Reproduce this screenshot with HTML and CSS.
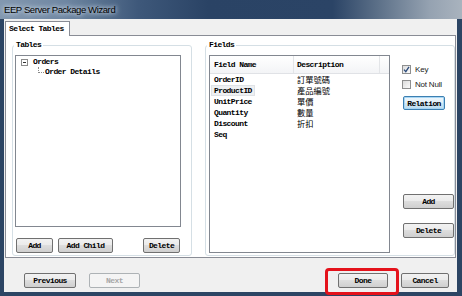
FILE: index.html
```html
<!DOCTYPE html>
<html lang="en">
<head>
  <meta charset="UTF-8">
  <title>EEP Server Package Wizard</title>
  <link rel="stylesheet" href="styles.css">
</head>
<body>
  <div class="window">
    <div class="titlebar">
      <span class="title">EEP Server Package Wizard</span>
    </div>
    <div class="client">
      <div class="tabstrip">
        <div class="tab">Select Tables</div>
      </div>
      <div class="tabpanel">
        <div class="group tables">
          <div class="legend">Tables</div>
          <div class="listbox">
            <div class="node"><span class="expander"></span><span>Orders</span></div>
            <div class="node child"><span class="elbow"></span><span>Order Details</span></div>
          </div>
          <div class="btnrow">
            <button class="btn w37">Add</button>
            <button class="btn w55">Add Child</button>
            <button class="btn w37 push">Delete</button>
          </div>
        </div>
        <div class="group fields">
          <div class="legend">Fields</div>
          <div class="fields-body">
            <div class="listview">
              <div class="lv-head">
                <div class="col1">Field Name</div>
                <div class="col2">Description</div>
                <div class="col3"></div>
              </div>
              <div class="lv-row"><div class="col1">OrderID</div><div class="col2 cjk">訂單號碼</div></div>
              <div class="lv-row"><div class="col1"><span class="hot">ProductID</span></div><div class="col2 cjk">產品編號</div></div>
              <div class="lv-row"><div class="col1">UnitPrice</div><div class="col2 cjk">單價</div></div>
              <div class="lv-row"><div class="col1">Quantity</div><div class="col2 cjk">數量</div></div>
              <div class="lv-row"><div class="col1">Discount</div><div class="col2 cjk">折扣</div></div>
              <div class="lv-row"><div class="col1">Seq</div><div class="col2 cjk"></div></div>
            </div>
            <div class="side">
              <div class="check first">
                <span class="box">
                  <svg width="7" height="7" viewBox="0 0 7 7"><path d="M1 3.6 L2.8 5.6 L6 0.8" fill="none" stroke="#2a4a7a" stroke-width="1.3"/></svg>
                </span>
                <span>Key</span>
              </div>
              <div class="check">
                <span class="box"></span>
                <span>Not Null</span>
              </div>
              <button class="btn relation">Relation</button>
              <button class="btn side-add">Add</button>
              <button class="btn side-delete">Delete</button>
            </div>
          </div>
        </div>
      </div>
      <div class="footer">
        <button class="btn prev">Previous</button>
        <button class="btn next" disabled>Next</button>
        <button class="btn done">Done</button>
        <button class="btn cancel">Cancel</button>
      </div>
    </div>
    <div class="callout"></div>
  </div>
</body>
</html>
```

FILE: styles.css
```css
body {
  margin: 0;
  padding: 0;
  font-family: "Liberation Mono", monospace;
  font-size: 8px;
  font-weight: bold;
  letter-spacing: -0.6px;
  color: #000;
}

.window {
  position: relative;
  width: 462px;
  height: 296px;
  display: flex;
  flex-direction: column;
  background: #2c4564;
  overflow: hidden;
}

.titlebar {
  height: 19px;
  flex: none;
  display: flex;
  align-items: center;
  padding-left: 4px;
  background: linear-gradient(to right, #8398b0 0%, #6f87a2 14%, #3e587a 30%, #2a4365 45%, #2b4466 72%, #5d7189 82%, #95a2b1 93%, #a9b3be 100%);
}

.title {
  font-family: "Liberation Sans", sans-serif;
  font-size: 9.5px;
  font-weight: normal;
  letter-spacing: -0.4px;
  color: #000;
  text-shadow: 0 0 4px #dfe8f2, 0 0 6px #c9d6e4;
}

.client {
  flex: 1;
  display: flex;
  flex-direction: column;
  margin: 0 5px 4px 4px;
  background: #f0f0f0;
}

.tabstrip {
  height: 16px;
  flex: none;
  display: flex;
  align-items: flex-end;
  padding-left: 1px;
}

.tab {
  position: relative;
  z-index: 1;
  width: 65px;
  height: 15px;
  box-sizing: border-box;
  margin-bottom: -1px;
  padding-left: 3px;
  line-height: 13px;
  border: 1px solid #898c95;
  border-bottom: none;
  background: #fff;
}

.tabpanel {
  height: 223px;
  flex: none;
  box-sizing: border-box;
  margin: 0 1px;
  padding: 9px 0 0 6px;
  display: flex;
  gap: 13px;
  border: 1px solid #898c95;
  background: #fff;
}

.group {
  height: 211px;
  box-sizing: border-box;
  border: 1px solid #d5dfe5;
  border-radius: 3px;
}

.tables {
  width: 180px;
}

.fields {
  width: 250px;
}

.legend {
  width: fit-content;
  margin: -6px 0 0 1px;
  padding: 0 2px;
  line-height: 10px;
  background: #fff;
}

.listbox {
  width: 166px;
  height: 172px;
  box-sizing: border-box;
  margin: 5px 0 0 2px;
  padding-top: 1px;
  border: 1px solid #828790;
}

.node {
  height: 10px;
  line-height: 10px;
  display: flex;
  align-items: center;
}

.expander {
  position: relative;
  width: 7px;
  height: 7px;
  box-sizing: border-box;
  margin: 0 5px 0 5px;
  border: 1px solid #8c8c8c;
  background: #fff;
}

.expander::after {
  content: "";
  position: absolute;
  left: 1px;
  top: 2px;
  width: 3px;
  height: 1px;
  background: #333;
}

.elbow {
  align-self: flex-start;
  width: 6px;
  height: 6px;
  box-sizing: border-box;
  margin: 0 1px 0 22px;
  border-left: 1px dotted #8a8a8a;
  border-bottom: 1px dotted #8a8a8a;
}

.btnrow {
  display: flex;
  gap: 5px;
  width: 164px;
  margin: 11px 0 0 3px;
}

.btn {
  height: 15px;
  box-sizing: border-box;
  padding: 0;
  border: 1px solid #707070;
  border-radius: 2px;
  background: linear-gradient(#f2f2f2, #ebebeb 45%, #dddddd 50%, #cfcfcf);
  font-family: "Liberation Mono", monospace;
  font-size: 8px;
  font-weight: bold;
  letter-spacing: -0.6px;
  color: #000;
}

.w37 {
  width: 37px;
}

.w55 {
  width: 55px;
}

.push {
  margin-left: auto;
}

.fields-body {
  display: flex;
  margin: 5px 0 0 3px;
}

.listview {
  width: 181px;
  height: 198px;
  box-sizing: border-box;
  border: 1px solid #828790;
}

.lv-head {
  height: 18px;
  box-sizing: border-box;
  display: flex;
  align-items: stretch;
  line-height: 17px;
  border-bottom: 1px solid #e0e2e6;
  background: linear-gradient(#fff, #f3f4f6);
}

.col1 {
  width: 84px;
  box-sizing: border-box;
  padding-left: 4px;
}

.col2 {
  width: 86px;
  box-sizing: border-box;
  padding-left: 3px;
}

.lv-head .col1,
.lv-head .col2 {
  border-right: 1px solid #e3e5e8;
}

.col3 {
  flex: 1;
}

.lv-row {
  height: 11px;
  line-height: 11px;
  display: flex;
}

.cjk {
  font-family: "Noto Sans CJK TC", sans-serif;
  font-size: 8.25px;
  font-weight: normal;
  letter-spacing: 0;
}

.hot {
  margin-left: -2px;
  padding: 0 2px;
  background: #eef0f2;
  outline: 1px solid #dfe2e6;
}

.side {
  width: 52px;
  margin-left: 12px;
  display: flex;
  flex-direction: column;
  align-items: flex-start;
}

.check {
  height: 9px;
  display: flex;
  align-items: center;
  margin-top: 6px;
  font-family: "Liberation Sans", sans-serif;
  font-size: 8px;
  font-weight: normal;
  letter-spacing: -0.2px;
  color: #222;
}

.check.first {
  margin-top: 10px;
}

.box {
  width: 9px;
  height: 9px;
  box-sizing: border-box;
  margin-right: 4px;
  display: flex;
  align-items: center;
  justify-content: center;
  border: 1px solid #8e8f8f;
  background: linear-gradient(135deg, #dcdcdc, #fbfbfb);
}

.relation {
  width: 42px;
  height: 14px;
  margin: 7px 0 0 1px;
  border-color: #3c7fb1;
  box-shadow: inset 0 0 0 1px #a7d6f4;
  background: linear-gradient(#eef6fb, #e3f0f8 50%, #cfe6f4 51%, #bcdcef);
}

.side-add,
.side-delete {
  width: 51px;
  margin-left: 1px;
}

.side-add {
  margin-top: 84px;
}

.side-delete {
  margin-top: 14px;
}

.footer {
  flex: 1;
  display: flex;
  align-items: flex-start;
  padding: 15px 8px 0 20px;
}

.prev {
  width: 52px;
}

.next {
  width: 51px;
  margin-left: 13px;
  border-color: #adb2b5;
  background: #f4f4f4;
  color: #a8a8a8;
}

.done {
  width: 50px;
  margin-left: auto;
}

.cancel {
  width: 48px;
  margin-left: 13px;
}

.callout {
  position: absolute;
  left: 325px;
  top: 268px;
  width: 74px;
  height: 27px;
  box-sizing: border-box;
  border: 3px solid #e4121b;
  border-radius: 4px;
}
```
